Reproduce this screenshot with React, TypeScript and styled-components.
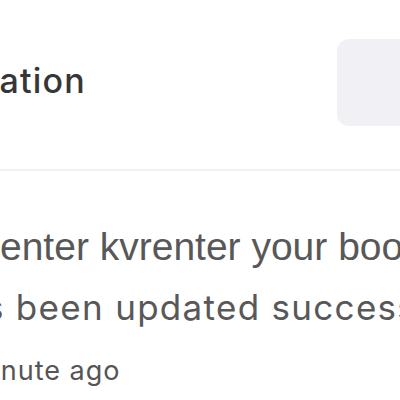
import React from "react";
import styled, { createGlobalStyle } from "styled-components";

const GlobalStyle = createGlobalStyle`
  html, body {
    margin: 0;
    padding: 0;
    background: #ffffff;
    overflow: hidden;
  }
  body {
    font-family: Inter, "Noto Sans", sans-serif;
  }
`;

const Panel = styled.section`
  width: 900px;
  margin-left: -104px;
  background: #ffffff;
`;

const Header = styled.header`
  display: grid;
  grid-template-columns: 190px auto;
  column-gap: 251px;
  align-items: center;
  padding: 39px 0 43px;
  border-bottom: 2px solid #eef2f6;
`;

const Title = styled.h2`
  margin: 0;
  justify-self: end;
  white-space: nowrap;
  font-family: Inter, "Noto Sans", sans-serif;
  font-weight: 500;
  font-size: 34px;
  line-height: 40px;
  color: #363636;
  letter-spacing: 1.2px;
  transform: translateY(-2px);
`;

const ActionButton = styled.button`
  width: 120px;
  height: 87px;
  border: none;
  border-radius: 12px;
  background: #f1f1f5;
  cursor: pointer;
`;

const Body = styled.div`
  padding: 45px 0 0 52px;
`;

const Message = styled.p<{ $sans?: boolean }>`
  margin: 0 0 0 ${({ $sans }) => ($sans ? "0" : "-6px")};
  white-space: nowrap;
  font-family: ${({ $sans }) =>
    $sans ? '"Liberation Sans", Arial, sans-serif' : 'Inter, "Noto Sans", sans-serif'};
  font-size: ${({ $sans }) => ($sans ? "39px" : "35px")};
  letter-spacing: ${({ $sans }) => ($sans ? "0" : "1.3px")};
  line-height: 61px;
  color: #585858;
`;

const Time = styled.span`
  display: block;
  margin-top: 13px;
  font-size: 27px;
  letter-spacing: 1px;
  line-height: 40px;
  color: #555555;
  white-space: nowrap;
`;

export default function App() {
  return (
    <>
      <GlobalStyle />
      <Panel>
        <Header>
          <Title>Notification</Title>
          <ActionButton aria-label="Mark all as read" />
        </Header>
        <Body>
          <Message $sans>kvrenter kvrenter your booking</Message>
          <Message>has been updated successfully</Message>
          <Time>1 minute ago</Time>
        </Body>
      </Panel>
    </>
  );
}
